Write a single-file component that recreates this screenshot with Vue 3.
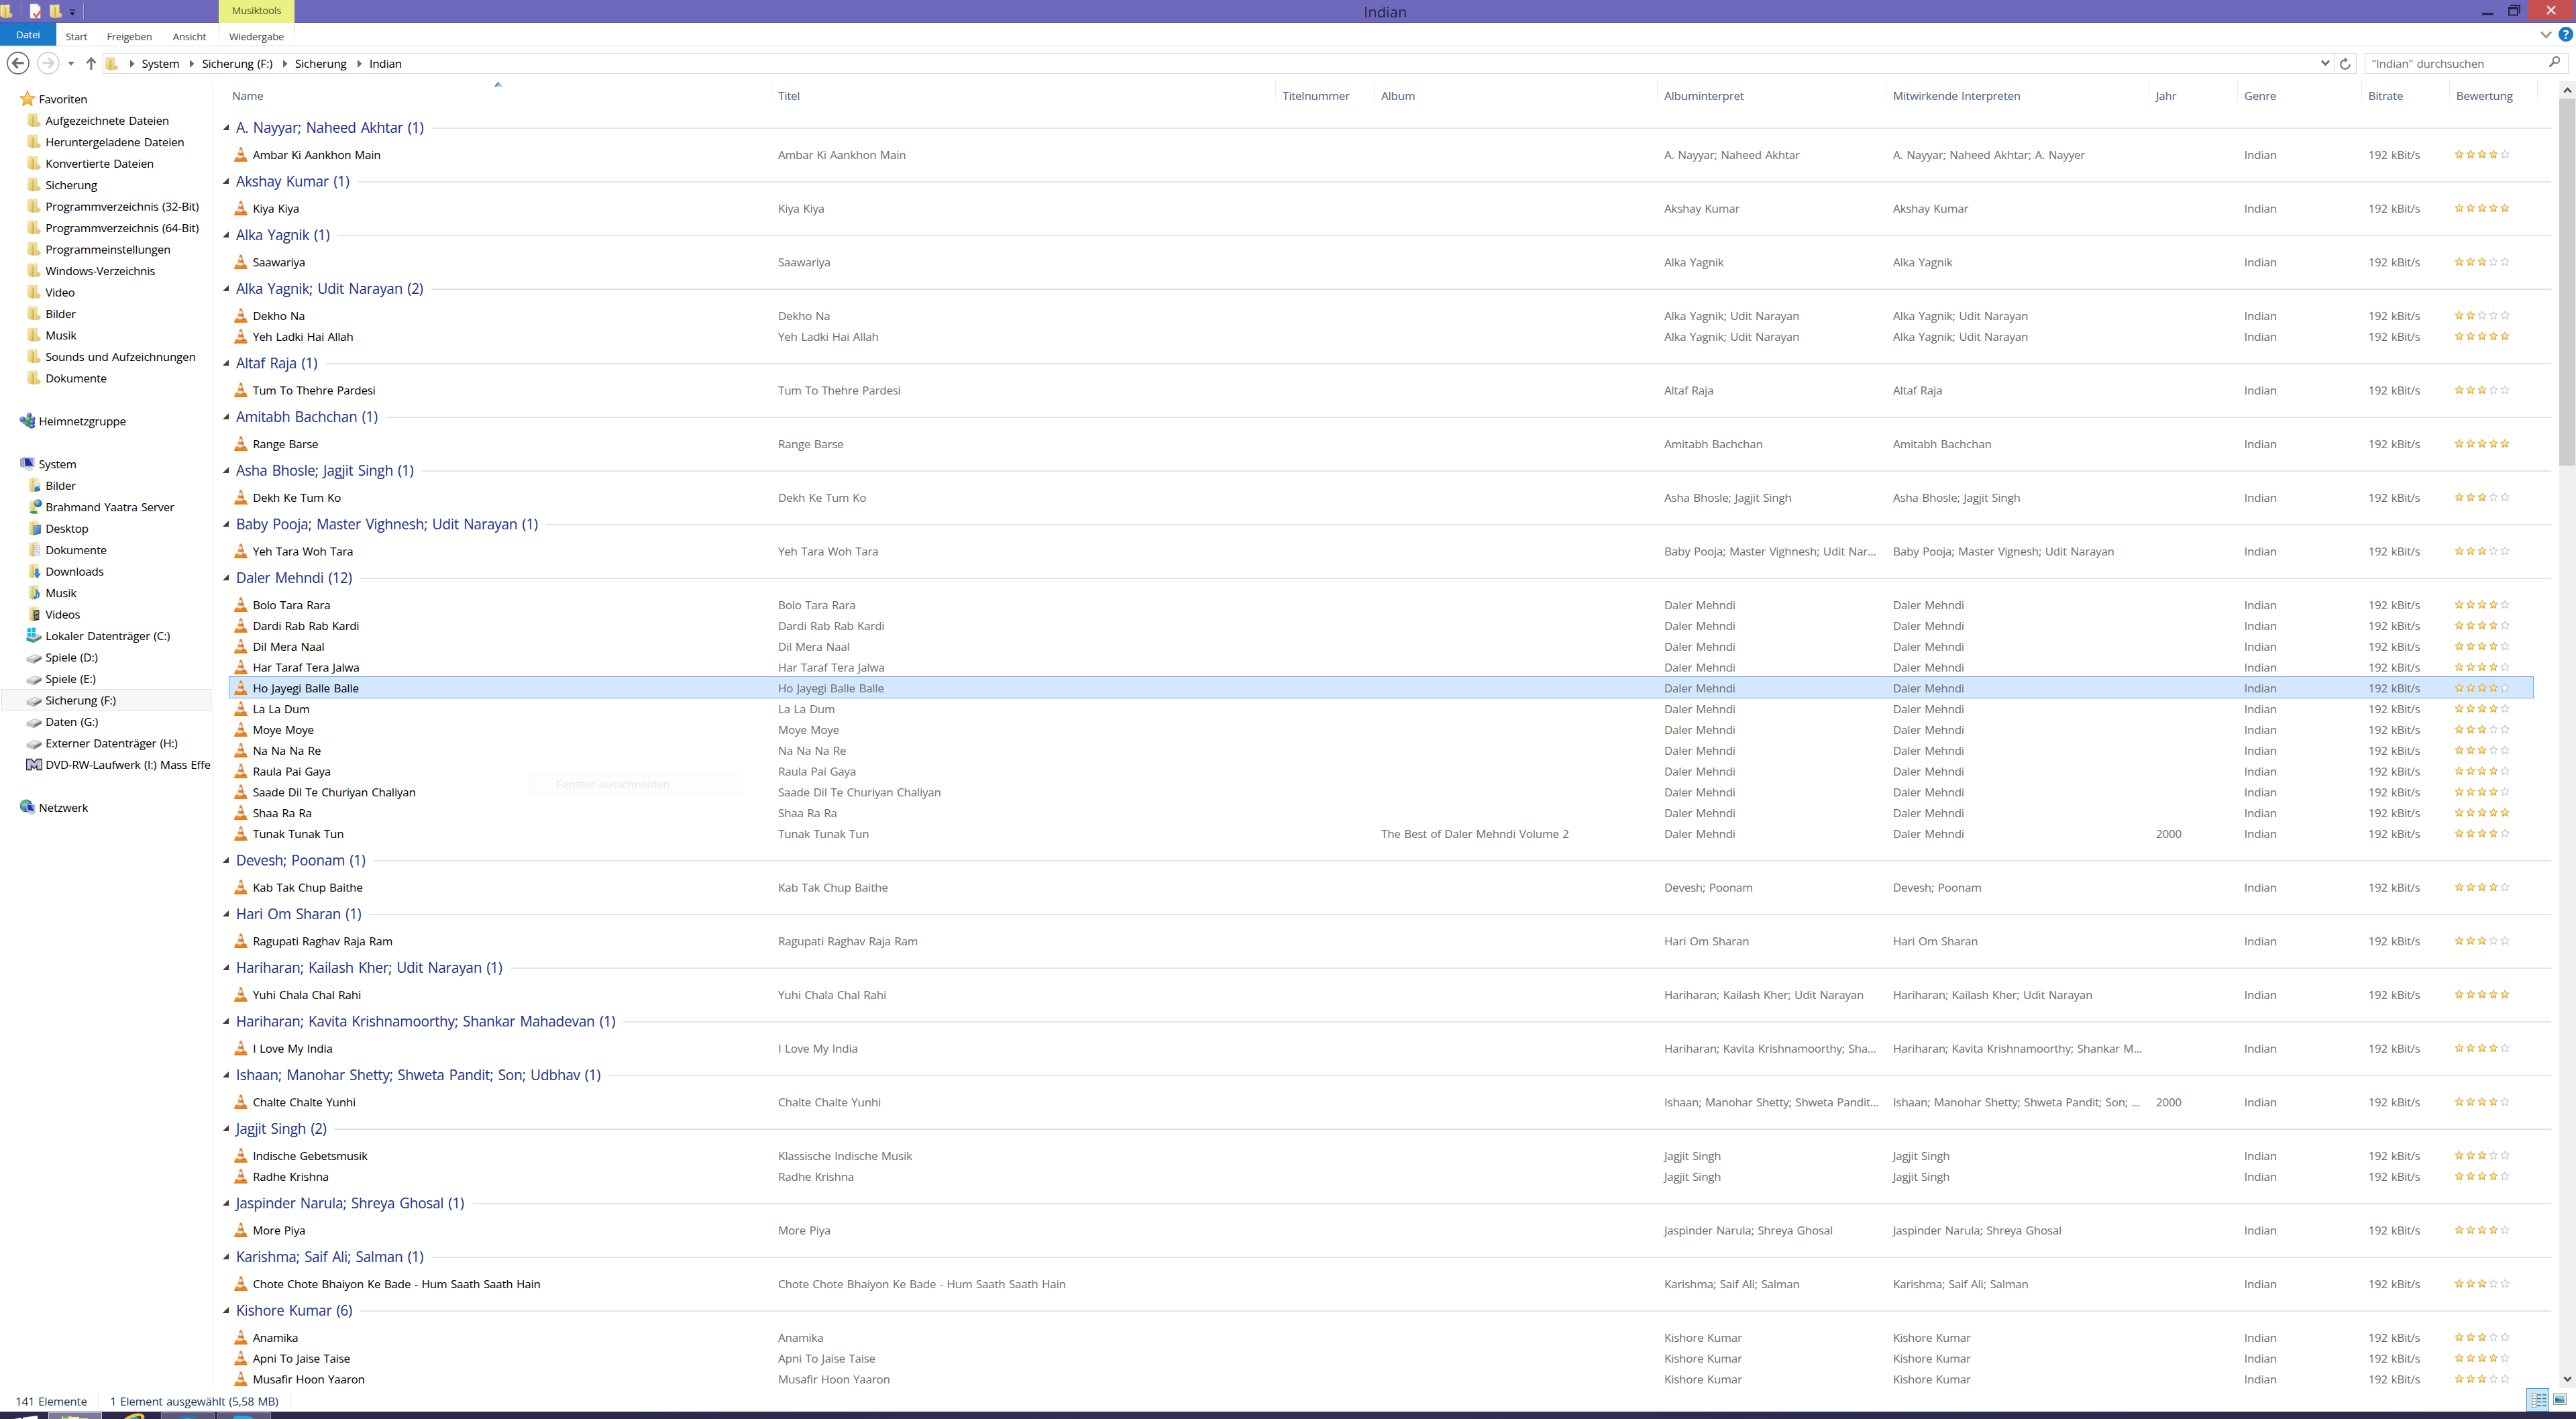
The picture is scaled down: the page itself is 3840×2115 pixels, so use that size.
<script setup>
const folders = [
  'Aufgezeichnete Dateien', 'Heruntergeladene Dateien', 'Konvertierte Dateien', 'Sicherung',
  'Programmverzeichnis (32-Bit)', 'Programmverzeichnis (64-Bit)', 'Programmeinstellungen',
  'Windows-Verzeichnis', 'Video', 'Bilder', 'Musik', 'Sounds und Aufzeichnungen', 'Dokumente',
].map((label) => ({ label, icon: 'folder' }))

const tree = [
  { label: 'Favoriten', icon: 'fav', root: true },
  ...folders,
  {},
  { label: 'Heimnetzgruppe', icon: 'homegroup', root: true },
  {},
  { label: 'System', icon: 'computer', root: true },
  { label: 'Bilder', icon: 'f-pictures' },
  { label: 'Brahmand Yaatra Server', icon: 'f-server' },
  { label: 'Desktop', icon: 'f-desktop' },
  { label: 'Dokumente', icon: 'f-docs' },
  { label: 'Downloads', icon: 'f-downloads' },
  { label: 'Musik', icon: 'f-music' },
  { label: 'Videos', icon: 'f-videos' },
  { label: 'Lokaler Datenträger (C:)', icon: 'drive-win' },
  { label: 'Spiele (D:)', icon: 'drive' },
  { label: 'Spiele (E:)', icon: 'drive' },
  { label: 'Sicherung (F:)', icon: 'drive', current: true },
  { label: 'Daten (G:)', icon: 'drive' },
  { label: 'Externer Datenträger (H:)', icon: 'drive' },
  { label: 'DVD-RW-Laufwerk (I:) Mass Effect', icon: 'dvd' },
  {},
  { label: 'Netzwerk', icon: 'network', root: true },
]

const columns = [
  ['name', 'Name'], ['title', 'Titel'], ['number', 'Titelnummer'], ['album', 'Album'],
  ['artist', 'Albuminterpret'], ['contrib', 'Mitwirkende Interpreten'], ['year', 'Jahr'],
  ['genre', 'Genre'], ['bitrate', 'Bitrate'], ['rating', 'Bewertung'],
]

const crumbs = ['System', 'Sicherung (F:)', 'Sicherung', 'Indian']

// track: [name, rating, extra fields]
const g = (name, tracks, opts = {}) => ({
  name,
  count: opts.count ?? tracks.length,
  tracks: tracks.map(([title, rating, extra = {}]) => ({
    title, rating, artist: opts.artist ?? name, contrib: opts.contrib ?? opts.artist ?? name,
    album: '', year: '', ...extra,
  })),
})

const groups = [
  g('A. Nayyar; Naheed Akhtar', [['Ambar Ki Aankhon Main', 4]], { contrib: 'A. Nayyar; Naheed Akhtar; A. Nayyer' }),
  g('Akshay Kumar', [['Kiya Kiya', 5]]),
  g('Alka Yagnik', [['Saawariya', 3]]),
  g('Alka Yagnik; Udit Narayan', [['Dekho Na', 2], ['Yeh Ladki Hai Allah', 5]]),
  g('Altaf Raja', [['Tum To Thehre Pardesi', 3]]),
  g('Amitabh Bachchan', [['Range Barse', 5]]),
  g('Asha Bhosle; Jagjit Singh', [['Dekh Ke Tum Ko', 3]]),
  g('Baby Pooja; Master Vighnesh; Udit Narayan', [['Yeh Tara Woh Tara', 3]], {
    artist: 'Baby Pooja; Master Vighnesh; Udit Nar...', contrib: 'Baby Pooja; Master Vignesh; Udit Narayan',
  }),
  g('Daler Mehndi', [
    ['Bolo Tara Rara', 4], ['Dardi Rab Rab Kardi', 4], ['Dil Mera Naal', 4], ['Har Taraf Tera Jalwa', 4],
    ['Ho Jayegi Balle Balle', 4, { selected: true }], ['La La Dum', 4], ['Moye Moye', 3], ['Na Na Na Re', 3],
    ['Raula Pai Gaya', 4], ['Saade Dil Te Churiyan Chaliyan', 4], ['Shaa Ra Ra', 5],
    ['Tunak Tunak Tun', 4, { album: 'The Best of Daler Mehndi Volume 2', year: '2000' }],
  ]),
  g('Devesh; Poonam', [['Kab Tak Chup Baithe', 4]]),
  g('Hari Om Sharan', [['Ragupati Raghav Raja Ram', 3]]),
  g('Hariharan; Kailash Kher; Udit Narayan', [['Yuhi Chala Chal Rahi', 5]]),
  g('Hariharan; Kavita Krishnamoorthy; Shankar Mahadevan', [['I Love My India', 4]], {
    artist: 'Hariharan; Kavita Krishnamoorthy; Sha...', contrib: 'Hariharan; Kavita Krishnamoorthy; Shankar M...',
  }),
  g('Ishaan; Manohar Shetty; Shweta Pandit; Son; Udbhav', [['Chalte Chalte Yunhi', 4, { year: '2000' }]], {
    artist: 'Ishaan; Manohar Shetty; Shweta Pandit...', contrib: 'Ishaan; Manohar Shetty; Shweta Pandit; Son; ...',
  }),
  g('Jagjit Singh', [['Indische Gebetsmusik', 3, { displayTitle: 'Klassische Indische Musik' }], ['Radhe Krishna', 4]]),
  g('Jaspinder Narula; Shreya Ghosal', [['More Piya', 4]]),
  g('Karishma; Saif Ali; Salman', [['Chote Chote Bhaiyon Ke Bade - Hum Saath Saath Hain', 3]]),
  g('Kishore Kumar', [['Anamika', 3], ['Apni To Jaise Taise', 4], ['Musafir Hoon Yaaron', 3]], { count: 6 }),
]
</script>

<template>
  <svg class="defs" width="0" height="0" aria-hidden="true">
    <defs>
      <linearGradient id="gFront" x1="0" y1="0" x2="1" y2="1">
        <stop offset="0" stop-color="#fbefb6" /><stop offset="1" stop-color="#dfbf5a" />
      </linearGradient>
      <linearGradient id="gBack" x1="0" y1="0" x2="1" y2="0">
        <stop offset="0" stop-color="#f3dc8c" /><stop offset="1" stop-color="#fbedb0" />
      </linearGradient>
      <linearGradient id="gStar" x1="0" y1="0" x2="0" y2="1">
        <stop offset="0.2" stop-color="#fffbe4" /><stop offset="1" stop-color="#f3c92e" />
      </linearGradient>
      <linearGradient id="gFav" x1="0" y1="0" x2="0" y2="1">
        <stop offset="0" stop-color="#fff0a0" /><stop offset="1" stop-color="#f6a51c" />
      </linearGradient>
      <linearGradient id="gCone" x1="0" y1="0" x2="1" y2="0">
        <stop offset="0" stop-color="#f0983c" /><stop offset="0.45" stop-color="#f58220" /><stop offset="1" stop-color="#b85a14" />
      </linearGradient>
      <linearGradient id="gWhite" x1="0" y1="0" x2="1" y2="0">
        <stop offset="0" stop-color="#cfcfcf" /><stop offset="0.4" stop-color="#f6f6f6" /><stop offset="1" stop-color="#aaaaaa" />
      </linearGradient>
      <linearGradient id="gBlue" x1="0" y1="0" x2="1" y2="1">
        <stop offset="0" stop-color="#8cc0ee" /><stop offset="1" stop-color="#2360ae" />
      </linearGradient>
      <radialGradient id="gGlobe" cx="0.35" cy="0.3" r="0.8">
        <stop offset="0" stop-color="#b9e2f2" /><stop offset="0.55" stop-color="#3688b4" /><stop offset="1" stop-color="#12406c" />
      </radialGradient>
      <radialGradient id="gBallBlue" cx="0.35" cy="0.3" r="0.8">
        <stop offset="0" stop-color="#a9bff0" /><stop offset="0.6" stop-color="#3a5cb8" /><stop offset="1" stop-color="#1c3587" />
      </radialGradient>
      <radialGradient id="gBallGreen" cx="0.35" cy="0.3" r="0.8">
        <stop offset="0" stop-color="#b5e0b0" /><stop offset="0.6" stop-color="#3b9440" /><stop offset="1" stop-color="#1c6428" />
      </radialGradient>
      <linearGradient id="gDrive" x1="0" y1="0" x2="1" y2="1">
        <stop offset="0" stop-color="#f4f4f2" /><stop offset="1" stop-color="#b9bdb8" />
      </linearGradient>
    </defs>
    <symbol id="folder" viewBox="0 0 24 24">
      <path d="M14 17l7-1 1.500 2.500-4 3.500H13z" fill="#777" opacity=".3" />
      <path d="M9 2.500l6-.8c1 0 1.400.5 1.400 1.400v11l2.600.8c.7.3 1 .8 1 1.400v2.900c0 .8-.5 1.200-1.200 1.300L9 22z" fill="url(#gFront)" stroke="#dcc578" stroke-width=".5" />
      <path d="M2.500 3.600c0-.8.4-1.300 1.200-1.300l3-.3c2.400 1 3.300 2.200 3.300 4.400V22l-5.900-1.900c-1-.3-1.600-.9-1.600-2z" fill="url(#gFront)" stroke="#d9c171" stroke-width=".6" />
      <path d="M9.700 5.500V21.500L11.500 20V6z" fill="#a58c45" opacity=".55" />
    </symbol>
    <symbol id="f-open" viewBox="0 0 24 24">
      <path d="M9 2l7.500-.6 1.800 1.200V20L9 22z" fill="url(#gBack)" stroke="#dfc67a" stroke-width=".5" />
      <path d="M5 2.500l5 1.500V22.500l-4-1.300c-.7-.2-1-.7-1-1.500z" fill="url(#gFront)" stroke="#d6bd6c" stroke-width=".6" />
      <path d="M10 4.500v17.500l1.500-1V5.500z" fill="#a58c45" opacity=".35" />
    </symbol>
    <symbol id="f-pictures" viewBox="0 0 24 24">
      <use href="#f-open" />
      <path d="M12 10l9-1.500V21L12 22.500z" fill="#7fb2d0" stroke="#e9f3f8" /><path d="M12.500 17l4-3 4.500 4v2.500l-8.500 1.500z" fill="#3d7d8c" /><path d="M12.500 11l8-1.500v3l-8 2z" fill="#d9edf6" />
    </symbol>
    <symbol id="f-server" viewBox="0 0 24 24">
      <path d="M5 3l9 0v15l-9 1z" fill="url(#gFront)" /><path d="M5 20c4-2 9-1 12-2l-1 3 3 1c-4 1-8 1.500-14-1z" fill="#2e9c4a" />
      <circle cx="17.500" cy="7" r="6" fill="url(#gGlobe)" /><path d="M13 5c2-3 4-3 5-2l-2 3-1 3z" fill="#8fce7a" opacity=".8" />
      <rect x="13" y="15" width="4" height="4" fill="#dfe3e5" />
    </symbol>
    <symbol id="f-desktop" viewBox="0 0 24 24"><use href="#f-open" /><path d="M11.500 8.500l10-1.200V20l-10 2.500z" fill="url(#gBlue)" stroke="#2c5f9f" stroke-width=".7" /></symbol>
    <symbol id="f-docs" viewBox="0 0 24 24">
      <use href="#f-open" /><path d="M12 7l8-1v14l-8 2z" fill="#f4f6f8" stroke="#9aa4ad" stroke-width=".8" /><path d="M13.500 10l5-.6M13.500 12.500l5-.6M13.500 15l5-.6M13.500 17.500l5-.6" stroke="#7d8fa3" stroke-width=".9" />
    </symbol>
    <symbol id="f-downloads" viewBox="0 0 24 24"><use href="#f-open" /><path d="M14 9h4v7h3.500L16.500 23 12 16h2z" fill="#2f96d8" stroke="#1b6ea8" stroke-width=".7" /></symbol>
    <symbol id="f-music" viewBox="0 0 24 24"><use href="#f-open" /><path d="M14.500 6c1 4 6 5 5.500 10-.2 2-1.200 3.500-2.200 4.500.8-4 0-6-2-7.500V19c0 2-1.500 3-3 3s-2.500-1.500-1.500-3 2-1.500 3.200-1.500z" fill="#2f96d8" stroke="#1f6ea6" stroke-width=".6" /></symbol>
    <symbol id="f-videos" viewBox="0 0 24 24">
      <use href="#f-open" /><path d="M11 7l8.500-1v15L11 22.500z" fill="#2e3438" /><path d="M13 8.500l5-.5v4l-5 .7z" fill="#7fa6b8" /><path d="M13 14.500l5-.7v4.500l-5 1z" fill="#b0722f" /><path d="M12 8v14M19 7v14" stroke="#d8d8d8" stroke-width=".8" stroke-dasharray="1.200 1.200" />
    </symbol>
    <symbol id="drive" viewBox="0 0 24 24">
      <path d="M.8 14.500L12 8.500l11 3.500v3.500L11.500 22 .8 18.800z" fill="#989d98" />
      <path d="M.8 14L12.500 8.500 23 11.800 11.500 17.800z" fill="url(#gDrive)" stroke="#a6aaa6" stroke-width=".6" />
      <path d="M11.500 17.800L23 11.800v3.500L11.500 22z" fill="#6f746f" /><path d="M.8 14l10.700 3.800V22L.8 18.500z" fill="#c2c6c1" />
      <path d="M12 19.200l2.500-1.300v1.500L12 20.700z" fill="#6fd06f" /><path d="M8 12.500l5-2 3 1-5 2z" fill="#fff" opacity=".8" />
    </symbol>
    <symbol id="drive-win" viewBox="0 0 24 24">
      <g transform="translate(0 1)"><use href="#drive" /></g>
      <path d="M.8 15l10.700 4v4L.8 19.800z" fill="#2f93a8" />
      <path d="M1.500 1.700L7 1v6H1.500zM8 .9L14 0v7H8zM1.500 8H7v6l-5.500-.7zM8 8h6v7l-6-.9z" fill="#18bdf0" />
    </symbol>
    <symbol id="dvd" viewBox="0 0 24 24">
      <path d="M.5 4.500H8l4 5 4-5h7.500v16H16v-6l-4 4-4-4v6H.5z" fill="#aab2c2" stroke="#22252e" stroke-width="1.300" />
      <path d="M3 7v11M5.500 7v9M19 8v10M21.300 7v11M8 9l4 4 4-4" stroke="#e8ecf4" fill="none" />
    </symbol>
    <symbol id="fav" viewBox="0 0 24 24"><path d="M12 .8l3.100 7.700 8.100.6-6.200 5.300 2 8.100-7-4.400-7 4.400 2-8.100L.8 9.100l8.100-.6z" fill="url(#gFav)" stroke="#e08a2c" stroke-width="1.200" stroke-linejoin="round" /></symbol>
    <symbol id="homegroup" viewBox="0 0 24 24">
      <circle cx="14.500" cy="4" r="3.700" fill="url(#gBallBlue)" /><circle cx="4.500" cy="10" r="4.300" fill="url(#gBallBlue)" /><circle cx="20.500" cy="9" r="3" fill="url(#gBallBlue)" />
      <path d="M4 14c1-3 5-2 7 1l-2 3c-3 0-5-2-5-4z" fill="#6f95d8" /><circle cx="13" cy="10.500" r="5" fill="url(#gBallGreen)" />
      <path d="M9 19c0-5 8-5 9 0 0 2-8 3-9 0z" fill="#3b9440" /><circle cx="19" cy="14.500" r="4" fill="url(#gBallBlue)" /><path d="M14 21c1-5 8-5 9.500-1-1 4-8.500 5-9.500 1z" fill="url(#gBallBlue)" />
    </symbol>
    <symbol id="computer" viewBox="0 0 24 24">
      <path d="M1.500 5L6 3v15l-4.500-2z" fill="#a9b0b8" stroke="#6f7780" stroke-width=".6" />
      <path d="M6 3l16 .5v13L7 17z" fill="#d6dade" stroke="#858c94" stroke-width=".7" /><path d="M7.500 4.300l12.500.4v10.500L8.500 15.500z" fill="#1b2fae" /><path d="M14 4.500l6 .2v10.500z" fill="#7f9be8" />
      <path d="M8 18.500l7-1 5 3-6 2.500z" fill="#dfe2e6" stroke="#9da3aa" stroke-width=".6" />
    </symbol>
    <symbol id="network" viewBox="0 0 24 24">
      <circle cx="10" cy="10" r="9.500" fill="url(#gGlobe)" /><path d="M3 4c4-4 9-4 11-2l-4 4-5 1-3 4c-1-3 0-5 1-7zM2 14l5 1 2 4c-4-.5-6-2.500-7-5z" fill="#58ad58" opacity=".85" />
      <path d="M10 6.500l13 2v12L11 18z" fill="#dfe4ea" stroke="#8a94a0" stroke-width=".6" /><path d="M11.500 8l10 1.500v9L12.500 16.500z" fill="#2038b4" /><path d="M17 9l4.500.6v8.800z" fill="#7f9be8" />
      <path d="M13 20l5-.5 4 2-4.500 2z" fill="#d0d5da" stroke="#98a0a8" stroke-width=".5" />
    </symbol>
    <symbol id="cone" viewBox="0 0 20 22">
      <path d="M2 15.500h16l1.800 5.500q0 .8-.8.8H1q-.8 0-.8-.8z" fill="#f58a16" /><path d="M.3 20.500h19.400v1.300H.3z" fill="#d9730f" />
      <path d="M8.500.8q1.500-.9 3 0L16 17.500q-6 2.600-12 0z" fill="url(#gCone)" />
      <path d="M7.700 4.200q2.300.8 4.600 0l1.100 4q-3.400 1.200-6.800 0z" fill="url(#gWhite)" /><path d="M5.600 11.900q4.400 1.600 8.800 0l1 3.800q-5.400 2-10.800 0z" fill="url(#gWhite)" />
    </symbol>
    <symbol id="star" viewBox="0 0 14 14"><path d="M7 .9l1.700 4 4.500.3-3.400 2.900 1.100 4.700L7 10.500l-3.900 2.300 1.100-4.700L.8 5.200l4.500-.3z" stroke-width="1" stroke-linejoin="round" /></symbol>
  </svg>

  <div class="window">
    <header class="titlebar">
      <div class="quick">
        <svg class="q1" width="24" height="24"><use href="#folder" /></svg>
        <i class="qsep" />
        <svg class="q2" width="22" height="24" viewBox="0 0 22 24"><path d="M2 1h11l4 4v17H2z" fill="#fbfbfd" stroke="#c8c8d4" stroke-width=".8" /><path d="M13 1v4h4z" fill="#c8c8d4" /><path d="M7 15l4 5.500 8-11" fill="none" stroke="#e2703a" stroke-width="3" /></svg>
        <svg class="q3" width="24" height="24"><use href="#folder" /></svg>
        <svg class="q4" width="10" height="10"><path d="M1 1h8" stroke="#111" stroke-width="1.300" /><path d="M1 4.500h8L5 9z" fill="#111" /></svg>
        <i class="qsep last" />
      </div>
      <div class="context-tab">Musiktools</div>
      <div class="caption">Indian</div>
      <div class="controls">
        <svg class="min" width="17" height="4"><rect width="17" height="3.500" fill="#25244a" /></svg>
        <svg class="max" width="18" height="17"><path d="M3 0h15v13h-2V2H3z" fill="#25244a" /><path d="M0 3h15v13.500H0zM2 7v7.500h11V7z" fill="#25244a" fill-rule="evenodd" /></svg>
        <div class="close"><svg width="14" height="14"><path d="M1 1l12 12M13 1L1 13" stroke="#fff" stroke-width="2.200" /></svg></div>
      </div>
    </header>

    <nav class="ribbon">
      <div class="tab file">Datei</div>
      <div class="tab start">Start</div>
      <div class="tab share">Freigeben</div>
      <div class="tab view">Ansicht</div>
      <div class="tab play">Wiedergabe</div>
      <svg class="expand" width="17" height="13"><path d="M1 1.500l7.500 8 7.500-8" fill="none" stroke="#9a9a9a" stroke-width="3" /></svg>
      <div class="help">?</div>
    </nav>

    <div class="address-row">
      <svg class="back" width="36" height="36"><circle cx="18" cy="18" r="16" fill="none" stroke="#6d6d6d" stroke-width="1.800" /><path d="M26.500 18H11M17.500 10.500L10.500 18l7 7.500" fill="none" stroke="#6d6d6d" stroke-width="3.400" /></svg>
      <svg class="fwd" width="36" height="36"><circle cx="18" cy="18" r="16" fill="none" stroke="#d2d2d2" stroke-width="1.800" /><path d="M9.500 18H25M18.500 10.500l7 7.500-7 7.500" fill="none" stroke="#d2d2d2" stroke-width="3.200" /></svg>
      <svg class="hist" width="10" height="6"><path d="M0 0h10L5 6z" fill="#7a7a7a" /></svg>
      <svg class="up" width="16" height="20"><path d="M8 20V3M1.500 10L8 3l6.500 7" fill="none" stroke="#7a7a7a" stroke-width="3.200" /></svg>
      <div class="address">
        <svg class="afolder" width="23" height="24"><use href="#folder" /></svg>
        <template v-for="c in crumbs" :key="c">
          <svg class="tri" width="7" height="12"><path d="M0 0v12l6.500-6z" fill="#6a6a6a" /></svg>
          <span class="crumb">{{ c }}</span>
        </template>
        <svg class="drop" width="13" height="11"><path d="M1 1.500l5.500 6 5.500-6" fill="none" stroke="#6a6a6a" stroke-width="2.800" /></svg>
        <div class="refresh"><svg width="18" height="20" viewBox="0 0 18 20"><path d="M15.600 10.500A6.700 6.700 0 1 1 9.500 4.400" fill="none" stroke="#757575" stroke-width="2.200" /><path d="M8 .5l5 3.700-5 4z" fill="#757575" /></svg></div>
      </div>
      <div class="search">
        <span>"Indian" durchsuchen</span>
        <svg width="18" height="18"><circle cx="11.500" cy="6.500" r="4.800" fill="none" stroke="#777" stroke-width="2" /><path d="M8 10l-6.500 6.500" stroke="#777" stroke-width="2.800" /></svg>
      </div>
    </div>

    <main class="body">
      <aside class="tree">
        <div v-for="(n, i) in tree" :key="i" class="node" :class="{ root: n.root, current: n.current }">
          <svg v-if="n.icon" width="24" height="24"><use :href="'#' + n.icon" /></svg>
          <span>{{ n.label }}</span>
        </div>
      </aside>

      <section class="list">
        <div class="grid head">
          <div v-for="[key, label] in columns" :key="key" class="cell" :class="key">{{ label }}</div>
          <svg class="sort" width="12" height="7"><path d="M0 7l6-7 6 7z" fill="#8cc3e0" /><path d="M0 7l6-7v2L2 7z" fill="#2c5f80" /></svg>
        </div>
        <div v-for="grp in groups" :key="grp.name">
          <div class="group">
            <svg width="9" height="9"><path d="M9 0v9H0z" fill="#404040" /></svg>
            <span>{{ grp.name }} ({{ grp.count }})</span>
            <i />
          </div>
          <div v-for="t in grp.tracks" :key="t.title" class="grid row" :class="{ selected: t.selected }">
            <div class="cell name"><svg width="20" height="22"><use href="#cone" /></svg>{{ t.title }}</div>
            <div class="cell title">{{ t.displayTitle ?? t.title }}</div>
            <div class="cell number" />
            <div class="cell album">{{ t.album }}</div>
            <div class="cell artist">{{ t.artist }}</div>
            <div class="cell contrib">{{ t.contrib }}</div>
            <div class="cell year">{{ t.year }}</div>
            <div class="cell genre">Indian</div>
            <div class="cell bitrate">192 kBit/s</div>
            <div class="cell rating">
              <svg v-for="s in 5" :key="s" width="14" height="14" :class="{ on: s <= t.rating }"><use href="#star" /></svg>
            </div>
          </div>
        </div>
        <div class="ghost">Fenster ausschneiden</div>
      </section>

      <div class="scroll">
        <svg width="13" height="10"><path d="M1.500 8.500l5-5.500 5 5.500" fill="none" stroke="#505050" stroke-width="2.800" /></svg>
        <div class="thumb" />
        <svg width="13" height="10"><path d="M1.500 1.500l5 5.500 5-5.500" fill="none" stroke="#505050" stroke-width="2.800" /></svg>
      </div>
    </main>

    <footer class="status">
      <span class="total">141 Elemente</span>
      <span class="picked">1 Element ausgewählt (5,58 MB)</span>
      <div class="vbtn active">
        <svg width="22" height="22"><g fill="#fff" stroke="#888" stroke-width=".9"><rect x=".5" y=".5" width="6" height="4" /><rect x=".5" y="4.700" width="6" height="4" /><rect x=".5" y="8.900" width="6" height="4" /><rect x=".5" y="13.100" width="6" height="4" /><rect x=".5" y="17.300" width="6" height="4" /></g><path d="M8 3h6M16 3h6M8 8.500h6M16 8.500h6M8 13.500h6M16 13.500h6M8 19h6M16 19h6" stroke="#3d6a85" stroke-width="1.300" /></svg>
      </div>
      <div class="vbtn">
        <svg width="20" height="17"><rect x=".6" y=".6" width="18.800" height="15.800" fill="#fff" stroke="#8693a8" stroke-width="1.200" /><rect x="3" y="3" width="14" height="11" fill="#8cc9ee" /><path d="M3 7c5 0 9 3 14 2.500V14H3z" fill="#2f6f82" /><path d="M3 12c5-2 9-1 14-2v4H3z" fill="#6aa58a" /></svg>
      </div>
    </footer>

    <div class="taskbar">
      <svg class="start-logo" width="36" height="5"><path d="M0 5l12-2v2zM14 2.700L36 0v5H14z" fill="#fff" /></svg>
      <div class="task explorer"><svg width="44" height="10"><path d="M2 10V2h14l3 3h22v5z" fill="#f2dc8c" /><rect x="4" y="1" width="8" height="4" fill="#5ea866" /><rect x="14" y="3" width="14" height="3" fill="#f7eec2" /></svg></div>
      <svg class="ie" width="38" height="9"><path d="M2 9c8-7 20-11 28-7 3 2 3 5 1 7h-4c3-6-6-5-14 0z" fill="#f5c52c" /><path d="M10 9c2-2 6-3 9-3s5 1 7 3z" fill="#2a9fe0" /></svg>
      <div class="task browser"><svg width="34" height="8"><ellipse cx="17" cy="12" rx="17" ry="11" fill="#1e79b8" /><ellipse cx="17" cy="13" rx="11" ry="8" fill="#58b8dc" /></svg></div>
      <div class="task skype"><svg width="36" height="8"><path d="M1 8C1 1 8-1 13 2c9-2 18 0 20 6z" fill="#0fb0f0" /></svg></div>
    </div>
  </div>
</template>

<style>
html, body { margin: 0; background: #fff; overflow: hidden; }
</style>

<style scoped>
.defs { position: absolute; }
.window {
  width: 3840px; height: 2115px; overflow: hidden; display: flex; flex-direction: column;
  background: #fff; color: #000; font-family: "Open Sans", "Noto Sans", sans-serif;
  font-size: 17px; letter-spacing: -0.23px; word-spacing: 1.3px; white-space: nowrap;
}
.window svg { flex: none; display: block; }
.window > * { flex: none; box-sizing: border-box; }

.titlebar { height: 34px; display: flex; background: #6f69bd; border-bottom: 1px solid #5a549f; }
.quick { width: 326px; display: flex; align-items: center; height: 33px; box-sizing: border-box; }
.q1 { margin-left: -2px; }
.qsep { width: 1px; height: 23px; margin-left: 9px; background: #aaa6da; box-shadow: 1px 0 #57519a; }
.q2 { margin-left: 11px; }
.q3 { margin-left: 7px; }
.q4 { margin-left: 7px; margin-top: 4px; }
.qsep.last { margin-left: 11px; }
.context-tab { width: 113px; height: 34px; line-height: 30px; text-align: center; background: #ebf082; font-size: 15px; color: #55552c; flex: none; }
.caption { margin-left: 1594px; width: 200px; font-size: 22px; line-height: 35px; color: #25244a; letter-spacing: 0; }
.controls { margin-left: auto; display: flex; }
.min { margin-top: 19px; }
.max { margin: 7px 11px 0 22px; }
.close { width: 69px; height: 30px; margin-right: 3px; background: #c75050; display: flex; align-items: center; justify-content: center; }

.ribbon { height: 35px; display: flex; border-bottom: 1px solid #dadbdc; font-size: 15px; color: #444; }
.tab { height: 34px; line-height: 41px; box-sizing: border-box; flex: none; text-align: center; }
.file { width: 84px; line-height: 35px; background: #1979ca; color: #fff; text-align: left; padding-left: 24px; }
.start { width: 60px; }
.share { width: 98px; }
.view { width: 84px; padding-right: 3px; }
.play { width: 113px; border: 1px solid; border-width: 0 1px; border-image: linear-gradient(#c8c8c8, #fff) 1; }
.expand { margin: 12px 10px 0 auto; }
.help { width: 22px; height: 22px; border-radius: 50%; margin: 6px 4px 0 0; background: #1979ca; color: #fff; font-weight: 700; font-size: 18px; line-height: 22px; text-align: center; letter-spacing: 0; }

.address-row { height: 52px; display: flex; align-items: flex-start; padding-top: 10px; }
.back { margin: -3px 0 0 8.500px; }
.fwd { margin: -3px 0 0 9.500px; }
.hist { margin: 13px 0 0 10.500px; }
.up { margin: 5px 0 0 17px; }
.address { margin-left: 9px; width: 3360px; height: 31px; box-sizing: border-box; border: 1px solid #d9d9d9; display: flex; align-items: center; flex: none; }
.afolder { margin: 0 16px 0 1px; }
.tri { margin-right: 11px; }
.crumb { margin-right: 16px; line-height: 29px; }
.drop { margin-left: auto; margin-right: 6px; }
.refresh { width: 32px; height: 29px; border-left: 1px solid #d9d9d9; display: flex; align-items: center; justify-content: center; }
.search { margin-left: 12px; width: 304px; height: 31px; box-sizing: border-box; border: 1px solid #d9d9d9; display: flex; align-items: center; justify-content: space-between; padding: 0 11px 0 10px; color: #6d6d6d; flex: none; }
.search svg { margin-top: -5px; }

.body { height: 1948px; display: flex; }
.tree { width: 318px; box-sizing: border-box; border-right: 1px solid #ededed; padding: 10px 2px 0; flex: none; overflow: hidden; }
.node { height: 32px; box-sizing: border-box; display: flex; align-items: center; gap: 5px; padding-left: 36px; border: 1px solid transparent; overflow: hidden; line-height: 31px; }
.node.root { padding-left: 26px; }
.node.current { background: #f7f7f7; border-color: #dedede; }

.list { width: 3485px; flex: none; position: relative; overflow: hidden; margin-right: 12px; }
.grid { display: grid; grid-template-columns: 809px 752px 147px 422px 341px 392px 131.500px 185px 131px 131px; padding-left: 23px; }
.cell { box-sizing: border-box; padding-left: 10px; display: flex; align-items: center; overflow: hidden; }
.head { height: 44px; color: #4c607a; position: relative; }
.head .cell { height: 36px; line-height: 43px; align-items: flex-start; border-right: 1px solid; border-image: linear-gradient(#d8e2f0, #e8eef6 60%, #fff) 1; }
.head .name { padding-left: 5px; }
.sort { position: absolute; left: 419px; top: 1px; }
.row { height: 31px; color: #6d6d6d; }
.row .cell { padding-top: 2px; }
.row .name { color: #000; padding-left: 8px; gap: 8px; }
.row .name svg { margin-top: -2px; }
.row .rating { padding: 0 0 0 7px; gap: 3px; }
.row .rating svg { fill: #fff; stroke: #b4b9c4; }
.row .rating svg.on { fill: url(#gStar); stroke: #cf9a32; }
.selected { height: 33px; margin: -1px 26px -1px 23px; padding-left: 0; background: #d1e8ff; outline: 1px solid #7aa7d6; outline-offset: -1px; position: relative; overflow: hidden; }
.group { height: 49px; display: flex; align-items: center; padding-left: 14px; font-size: 21px; color: #1e3287; letter-spacing: -0.35px; word-spacing: 2px; }
.group svg { margin-right: 11px; }
.group span { margin-right: 12px; line-height: 49px; padding-top: 2px; }
.group i { flex: 1; height: 2px; background: #e4e4e4; margin-top: 3px; }
.ghost { position: absolute; left: 469px; top: 1031px; width: 320px; height: 31px; box-sizing: border-box; padding-left: 41px; line-height: 31px; background: #fbfdff; border: 1px solid #f3f8fe; color: #e6e9ec; }

.scroll { width: 25px; background: #f0f0f0; display: flex; flex-direction: column; align-items: center; box-sizing: border-box; padding: 8px 1px 8px 0; }
.thumb { width: 24px; height: 547px; background: #cdcdcd; margin: 8px 0 auto; }

.status { height: 35px; display: flex; align-items: center; color: #1e395b; padding-left: 23px; }
.status span { height: 24px; line-height: 27px; border-right: 1px solid #e6e6e6; box-sizing: border-box; }
.total { width: 124px; }
.picked { width: 286px; padding-left: 17px; margin-right: auto; }
.vbtn { width: 34px; height: 35px; display: flex; align-items: center; justify-content: center; box-sizing: border-box; margin-right: 8px; padding-bottom: 2px; }
.vbtn:not(.active) { width: 20px; margin: 0 14px 0 -2px; }
.vbtn.active { background: #c5e6f7; border: 1px solid #3f9dc6; padding: 1px 0 0 4px; }

.taskbar { height: 11px; background: linear-gradient(90deg, #2b284f 0 25%, #2f2a58 35%, #352c5e 50%, #2d2a54 70%, #2d2950); display: flex; align-items: flex-end; overflow: hidden; }
.start-logo { margin-left: 20px; }
.task { height: 10px; width: 80px; box-sizing: border-box; background: #5a587c; border: 1px solid #8d8ba8; border-bottom: 0; display: flex; justify-content: center; overflow: hidden; }
.explorer { margin-left: 16px; background: #7c7a98; border-color: #d8d7e4; }
.ie { margin: 0 19px 0 31px; }
.browser { margin-right: 4px; }
.task svg { margin-top: 3px; }
</style>
